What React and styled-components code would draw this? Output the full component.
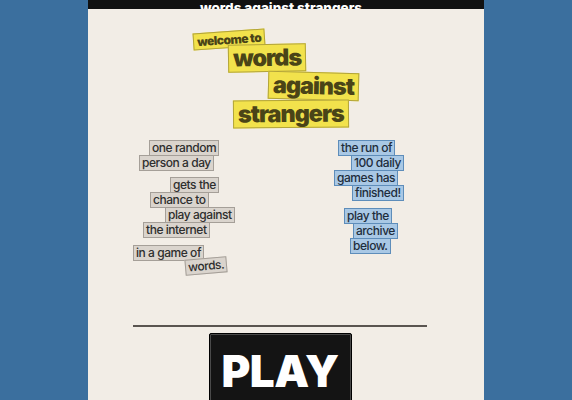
import React from "react"
import styled, { createGlobalStyle } from "styled-components"

const Global = createGlobalStyle`
  html, body {
    margin: 0;
    padding: 0;
    background: #3b6f9e;
    overflow: hidden;
  }
  body {
    font-family: Inter, "Liberation Sans", Arial, sans-serif;
  }
`

const Panel = styled.main`
  width: 396px;
  min-height: 400px;
  margin: 0 auto;
  background: #f2ede6;
  display: flex;
  flex-direction: column;
`

const Header = styled.header`
  height: 9px;
  background: #111;
  overflow: hidden;
  display: flex;
  justify-content: center;
  align-items: flex-end;
  padding-right: 10px;

  span {
    color: #fff;
    font-weight: 800;
    font-size: 13.5px;
    line-height: 14px;
    margin-bottom: -6px;
    white-space: nowrap;
  }
`

const Title = styled.div`
  display: flex;
  flex-direction: column;
  align-items: flex-start;
  margin: 22px 0 0 105px;
`

const TitleTag = styled.span`
  display: inline-block;
  background: #f2e24c;
  border: 1px solid #b2a43a;
  color: #4a4417;
  font-weight: 900;
  white-space: nowrap;
  font-size: ${p => (p.$small ? "12px" : "23.5px")};
  line-height: ${p => (p.$small ? "15px" : "26px")};
  padding: ${p => (p.$small ? "0 3px" : "0 4px")};
  margin-left: ${p => p.$x || 0}px;
  margin-top: ${p => p.$y || 0}px;
  transform: rotate(${p => p.$r || 0}deg);
  letter-spacing: ${p => (p.$small ? "-0.5px" : "-1.1px")};
`

const Columns = styled.div`
  display: flex;
  margin: 12px 0 0 45px;
  gap: 101px;
`

const Stack = styled.div`
  width: ${p => p.$w}px;
  display: flex;
  flex-direction: column;
  align-items: flex-start;
`

const Tag = styled.span`
  display: inline-block;
  white-space: nowrap;
  font-size: 12px;
  font-weight: 500;
  line-height: 14px;
  letter-spacing: -0.45px;
  padding: 0 2px;
  background: ${p => (p.$blue ? "#a9c8e5" : "#dad4cd")};
  border: 1px solid ${p => (p.$blue ? "#5e8dba" : "#a59f98")};
  color: ${p => (p.$blue ? "#1e2d3c" : "#2e2e2e")};
  margin-left: ${p => p.$x || 0}px;
  margin-top: ${p => (p.$y === undefined ? -1 : p.$y)}px;
  transform: rotate(${p => p.$r || 0}deg);
`

const Footer = styled.div`
  width: 294px;
  margin: 51px 0 0 45px;
  display: flex;
  flex-direction: column;
  align-items: center;
`

const Rule = styled.hr`
  width: 100%;
  margin: 0;
  border: 0;
  height: 2px;
  background: #5a5550;
`

const PlayButton = styled.button`
  margin-top: 6px;
  width: 143px;
  height: 72px;
  background: #141414;
  border: 1px solid #000;
  box-shadow: inset 0 0 0 1px #4a4a4a;
  border-radius: 2px;
  color: #fff;
  font-family: Inter, "Liberation Sans", Arial, sans-serif;
  font-weight: 900;
  font-size: 44px;
  line-height: 44px;
  letter-spacing: -0.5px;
  padding: 15px 0 0;
  display: flex;
  justify-content: center;
  align-items: flex-start;
  cursor: pointer;
`

const left = [
  { t: "one random", x: 16, y: 0 },
  { t: "person a day", x: 6 },
  { t: "gets the", x: 37, y: 6 },
  { t: "chance to", x: 17 },
  { t: "play against", x: 32 },
  { t: "the internet", x: 10 },
  { t: "in a game of", x: 0, y: 7 },
  { t: "words.", x: 52, y: -3, r: -5 },
]

const right = [
  { t: "the run of", x: 4, y: 0 },
  { t: "100 daily", x: 17 },
  { t: "games has", x: 0 },
  { t: "finished!", x: 18 },
  { t: "play the", x: 10, y: 7 },
  { t: "archive", x: 19 },
  { t: "below.", x: 16 },
]

export default function App() {
  return (
    <>
      <Global />
      <Panel>
        <Header><span>words against strangers</span></Header>
        <Title>
          <TitleTag $small $r={-4}>welcome to</TitleTag>
          <TitleTag $x={35} $y={-4} $r={-1}>words</TitleTag>
          <TitleTag $x={75} $r={1.5}>against</TitleTag>
          <TitleTag $x={40} $r={-0.5}>strangers</TitleTag>
        </Title>
        <Columns>
          <Stack $w={100}>
            {left.map(l => (
              <Tag key={l.t} $x={l.x} $y={l.y} $r={l.r}>{l.t}</Tag>
            ))}
          </Stack>
          <Stack $w={80}>
            {right.map(l => (
              <Tag $blue key={l.t} $x={l.x} $y={l.y} $r={l.r}>{l.t}</Tag>
            ))}
          </Stack>
        </Columns>
        <Footer>
          <Rule />
          <PlayButton>PLAY</PlayButton>
        </Footer>
      </Panel>
    </>
  )
}
